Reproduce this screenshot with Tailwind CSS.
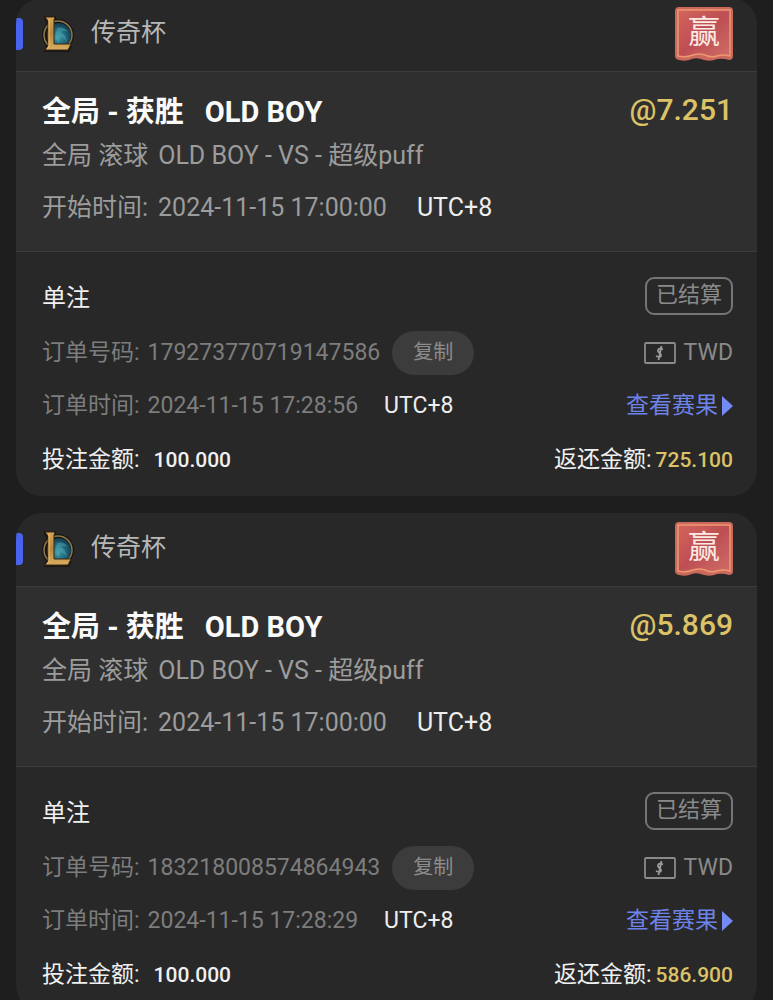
<!DOCTYPE html>
<html lang="zh-CN">
<head>
    <meta charset="UTF-8">
    <meta name="viewport" content="width=device-width, initial-scale=1.0">
    <title>注单记录</title>
    <script src="https://cdn.jsdelivr.net/npm/@tailwindcss/browser@4"></script>
</head>
<body class="h-screen overflow-hidden bg-[#1e1e1e] font-[Roboto,'Noto_Sans_CJK_SC',sans-serif] text-[#f0f0f0]">
    <!-- Shared artwork -->
    <svg class="absolute size-0" aria-hidden="true">
        <defs>
            <linearGradient id="gold" x1="0" y1="0" x2="0" y2="1">
                <stop offset="0" stop-color="#d9a653"/>
                <stop offset=".5" stop-color="#ba8638"/>
                <stop offset="1" stop-color="#d9ad60"/>
            </linearGradient>
            <radialGradient id="orb" cx=".45" cy=".6" r=".6">
                <stop offset="0" stop-color="#3d9aaa"/>
                <stop offset=".6" stop-color="#1f6478"/>
                <stop offset="1" stop-color="#123a4b"/>
            </radialGradient>
            <linearGradient id="flag" x1="0" y1="0" x2="1" y2="1">
                <stop offset="0" stop-color="#d3655c"/>
                <stop offset=".5" stop-color="#bd4f54"/>
                <stop offset="1" stop-color="#cf6d67"/>
            </linearGradient>
        </defs>
        <symbol id="lol" viewBox="0 0 34 36">
            <circle cx="17" cy="19" r="16" fill="#171614"/>
            <path d="M3 0h12v30h16l-3 6H3l2-6V6L3 3z" fill="#171614"/>
            <circle cx="17" cy="19" r="14" fill="none" stroke="#8d7748" stroke-width="1.500"/>
            <circle cx="18" cy="19" r="12" fill="url(#orb)"/>
            <path d="M16 12q7-2 11 4-4-2-7 0 5 3 6 10-4-5-7-5l-1 6-4-5z" fill="#55adb5" opacity=".45"/>
            <path d="M4 1h10l-1 3v24h17l-3 6H4l3-4V5z" fill="url(#gold)" stroke="#392914" stroke-width="1"/>
            <path d="M8 3v27l-2 3" fill="none" stroke="#e6c173" stroke-width="1"/>
        </symbol>
        <symbol id="win-flag" viewBox="0 0 58 54">
            <path d="M4 0h50q4 0 4 4v45q0 4-4 4-6-2-12-1-6 3-13 1-7-3-12-1-6 3-13 1-4-1-4-4V4q0-4 4-4z" fill="#c9685b"/>
            <path d="M3 3h52v46q-7-2-13 0-6 2-12-1-6-2-12 0-8 3-15 1z" fill="url(#flag)" stroke="#ed9871" stroke-width="1.500"/>
        </symbol>
        <symbol id="money" viewBox="0 0 32 22">
            <rect x="1" y="1" width="30" height="20" rx="1" fill="none" stroke="#8a8a8a" stroke-width="1.800"/>
            <path d="M19 7.500q-4-2-5 .5c-1 3 4 3 3 6q-1 2-5 0M17.500 4l-3 14" fill="none" stroke="#9a9a9a" stroke-width="1.800"/>
        </symbol>
    </svg>

    <main class="-mt-0.5 flex flex-col gap-[17px] px-4">
        <!-- Bet 1 -->
        <article class="overflow-hidden rounded-[26px] bg-[#282828]">
            <header class="flex h-[74px] items-center border-b border-[#3c3c3c] pr-6 pb-0.5">
                <span class="h-8 w-[7px] rounded-r bg-[#4a63ee]"></span>
                <svg class="ml-[18px] h-9 w-[34px]" aria-hidden="true"><use href="#lol"/></svg>
                <h2 class="ml-4 pb-0.5 text-[25px] leading-8 text-[#b8b8b8]">传奇杯</h2>
                <span class="relative ml-auto h-[54px] w-[58px]">
                    <svg class="h-full w-full" aria-hidden="true"><use href="#win-flag"/></svg>
                    <span class="absolute inset-0 text-center text-[32px] leading-[50px] text-[#fbe9e4]">赢</span>
                </span>
            </header>
            <section class="border-b border-[#3c3c3c] bg-[#2f2f2f] pt-5 pr-6 pb-[27px] pl-[26px]">
                <div class="flex justify-between leading-10">
                    <h3 class="flex gap-[21px] text-[29px] font-bold text-[#fafafa]"><span>全局 - 获胜</span><span>OLD BOY</span></h3>
                    <span class="-mt-0.5 text-[30px] font-medium text-[#dcc266]">@7.251</span>
                </div>
                <p class="mt-2 flex gap-2.5 text-[25px] leading-8 text-[#9c9c9c]"><span>全局 滚球</span><span>OLD BOY - VS - 超级puff</span></p>
                <p class="mt-5 flex text-[25px] leading-8 text-[#9c9c9c]"><span>开始时间:</span><time class="ml-2.5">2024-11-15 17:00:00</time><span class="ml-[30px] text-[#eeeeee]">UTC+8</span></p>
            </section>
            <section class="pt-[25px] pr-6 pb-5 pl-[26px] text-[23px] leading-8">
                <div class="flex items-center justify-between">
                    <h4 class="pt-1 text-2xl leading-8">单注</h4>
                    <span class="flex h-[38px] items-center rounded-[9px] border-2 border-[#757575] px-[9px] pb-0.5 text-[22px] text-[#8a8a8a]">已结算</span>
                </div>
                <div class="mt-4 flex items-center text-[#7d7d7d]">
                    <span>订单号码:</span><span class="ml-2">179273770719147586</span>
                    <button type="button" class="ml-3 h-11 rounded-full bg-[#3c3c3c] px-[21px] pb-0.5 text-xl text-[#8c8c8c]">复制</button>
                    <span class="ml-auto flex items-center gap-2 text-[#8a8a8a]"><svg class="h-[22px] w-8" aria-hidden="true"><use href="#money"/></svg>TWD</span>
                </div>
                <div class="mt-[15px] flex items-center text-[#7d7d7d]">
                    <span>订单时间:</span><time class="ml-2">2024-11-15 17:28:56</time><span class="ml-[26px] text-[#eeeeee]">UTC+8</span>
                    <a href="#result-1" class="ml-auto flex items-center gap-1 text-[#6d83e8]">查看赛果<svg class="h-5 w-[11px]" viewBox="0 0 11 20" aria-hidden="true"><path d="M0 0l11 10L0 20z" fill="#748bf5"/></svg></a>
                </div>
                <div class="mt-[22px] flex items-center">
                    <span>投注金额:</span><span class="ml-3.5 text-[21px] font-medium">100.000</span>
                    <span class="ml-auto">返还金额:</span><span class="ml-1 text-[21px] font-medium text-[#dcc266]">725.100</span>
                </div>
            </section>
        </article>

        <!-- Bet 2 -->
        <article class="overflow-hidden rounded-[26px] bg-[#282828]">
            <header class="flex h-[74px] items-center border-b border-[#3c3c3c] pr-6 pb-0.5">
                <span class="h-8 w-[7px] rounded-r bg-[#4a63ee]"></span>
                <svg class="ml-[18px] h-9 w-[34px]" aria-hidden="true"><use href="#lol"/></svg>
                <h2 class="ml-4 pb-0.5 text-[25px] leading-8 text-[#b8b8b8]">传奇杯</h2>
                <span class="relative ml-auto h-[54px] w-[58px]">
                    <svg class="h-full w-full" aria-hidden="true"><use href="#win-flag"/></svg>
                    <span class="absolute inset-0 text-center text-[32px] leading-[50px] text-[#fbe9e4]">赢</span>
                </span>
            </header>
            <section class="border-b border-[#3c3c3c] bg-[#2f2f2f] pt-5 pr-6 pb-[27px] pl-[26px]">
                <div class="flex justify-between leading-10">
                    <h3 class="flex gap-[21px] text-[29px] font-bold text-[#fafafa]"><span>全局 - 获胜</span><span>OLD BOY</span></h3>
                    <span class="-mt-0.5 text-[30px] font-medium text-[#dcc266]">@5.869</span>
                </div>
                <p class="mt-2 flex gap-2.5 text-[25px] leading-8 text-[#9c9c9c]"><span>全局 滚球</span><span>OLD BOY - VS - 超级puff</span></p>
                <p class="mt-5 flex text-[25px] leading-8 text-[#9c9c9c]"><span>开始时间:</span><time class="ml-2.5">2024-11-15 17:00:00</time><span class="ml-[30px] text-[#eeeeee]">UTC+8</span></p>
            </section>
            <section class="pt-[25px] pr-6 pb-5 pl-[26px] text-[23px] leading-8">
                <div class="flex items-center justify-between">
                    <h4 class="pt-1 text-2xl leading-8">单注</h4>
                    <span class="flex h-[38px] items-center rounded-[9px] border-2 border-[#757575] px-[9px] pb-0.5 text-[22px] text-[#8a8a8a]">已结算</span>
                </div>
                <div class="mt-4 flex items-center text-[#7d7d7d]">
                    <span>订单号码:</span><span class="ml-2">183218008574864943</span>
                    <button type="button" class="ml-3 h-11 rounded-full bg-[#3c3c3c] px-[21px] pb-0.5 text-xl text-[#8c8c8c]">复制</button>
                    <span class="ml-auto flex items-center gap-2 text-[#8a8a8a]"><svg class="h-[22px] w-8" aria-hidden="true"><use href="#money"/></svg>TWD</span>
                </div>
                <div class="mt-[15px] flex items-center text-[#7d7d7d]">
                    <span>订单时间:</span><time class="ml-2">2024-11-15 17:28:29</time><span class="ml-[26px] text-[#eeeeee]">UTC+8</span>
                    <a href="#result-2" class="ml-auto flex items-center gap-1 text-[#6d83e8]">查看赛果<svg class="h-5 w-[11px]" viewBox="0 0 11 20" aria-hidden="true"><path d="M0 0l11 10L0 20z" fill="#748bf5"/></svg></a>
                </div>
                <div class="mt-[22px] flex items-center">
                    <span>投注金额:</span><span class="ml-3.5 text-[21px] font-medium">100.000</span>
                    <span class="ml-auto">返还金额:</span><span class="ml-1 text-[21px] font-medium text-[#dcc266]">586.900</span>
                </div>
            </section>
        </article>
    </main>
</body>
</html>
